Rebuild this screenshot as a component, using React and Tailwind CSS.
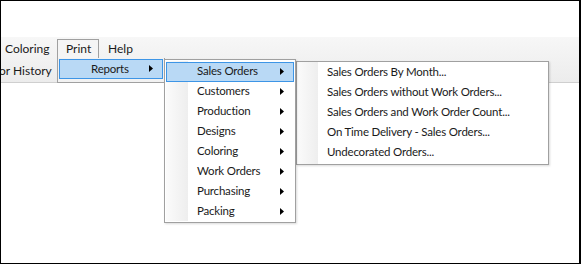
const font = { fontFamily: 'Lato, "Noto Sans", sans-serif' }

function Arrow() {
  return (
    <svg width="4" height="7" viewBox="0 0 4 7" className="block">
      <path d="M0 0 L4 3.5 L0 7 Z" fill="#000" />
    </svg>
  )
}

const salesItems = ['Sales Orders', 'Customers', 'Production', 'Designs', 'Coloring', 'Work Orders', 'Purchasing', 'Packing']
const reportItems = [
  'Sales Orders By Month...',
  'Sales Orders without Work Orders...',
  'Sales Orders and Work Order Count...',
  'On Time Delivery - Sales Orders...',
  'Undecorated Orders...',
]

export default function App() {
  return (
    <div className="relative h-[264px] w-[581px] overflow-hidden border-t border-l border-r-2 border-b border-black bg-white text-[11.5px] tracking-[-0.2px] text-[#1a1a1a]" style={font}>
      <div className="h-[36px]" />
      <div className="border-b border-[#cfcfcf] bg-gradient-to-b from-[#f7f7f7] to-[#ececec]">
        <div className="flex h-[21px] items-end text-[12px] tracking-normal">
          <div className="flex h-[19px] w-[56px] items-center pl-[4px]">Coloring</div>
          <div className="flex h-[19px] w-[42px] items-center border border-b-0 border-[#a0a0a0] bg-[#f5f5f5] pl-[8px]">Print</div>
          <div className="flex h-[19px] items-center pl-[9px]">Help</div>
        </div>
        <div className="flex h-[24px] items-center pt-[1px] whitespace-nowrap text-[12px] tracking-normal">
          <span className="-ml-[2px]">or History</span>
          <span className="ml-[7px]">(</span>
        </div>
      </div>

      {/* Print dropdown */}
      <div className="absolute left-[56px] top-[57px] h-[25px] w-[108px] border border-t-0 border-[#a0a0a0] bg-[#f2f2f2] p-[1px]">
        <div className="flex h-[20px] items-center border border-[#3d95e6] bg-[#b9d9f5] pb-[1px]">
          <span className="ml-[31px]">Reports</span>
          <span className="ml-auto mr-[9px]"><Arrow /></span>
        </div>
      </div>

      {/* Reports submenu */}
      <div className="absolute left-[295px] top-[60px] h-[104px] w-[253px] border border-[#a0a0a0] bg-white shadow-[1px_1px_2px_rgba(0,0,0,0.15)]">
        <div className="flex h-full">
          <div className="w-[21px] bg-gradient-to-r from-[#fbfbfb] to-[#eeeeee]" />
          <div className="flex flex-1 flex-col">
            {reportItems.map((item) => (
              <div key={item} className="flex h-[20px] items-center pl-[9px] pb-[1px] whitespace-nowrap">{item}</div>
            ))}
          </div>
        </div>
      </div>

      {/* Sales submenu */}
      <div className="absolute left-[163px] top-[58px] h-[164px] w-[132px] border border-[#a0a0a0] bg-white p-[1px] shadow-[1px_1px_2px_rgba(0,0,0,0.15)]">
        <div className="relative h-full">
          <div className="absolute left-0 top-0 h-full w-[22px] bg-gradient-to-r from-[#fbfbfb] to-[#eeeeee]" />
          <div className="relative flex flex-col pt-[1px]">
            {salesItems.map((item, i) => (
              <div
                key={item}
                className={`flex h-[20px] items-center pb-[2px] whitespace-nowrap ${i === 0 ? 'border border-[#3d95e6] bg-[#b9d9f5]' : 'border border-transparent'}`}
              >
                <span className="ml-[30px]">{item}</span>
                <span className="ml-auto mr-[9px]"><Arrow /></span>
              </div>
            ))}
          </div>
        </div>
      </div>
    </div>
  )
}
